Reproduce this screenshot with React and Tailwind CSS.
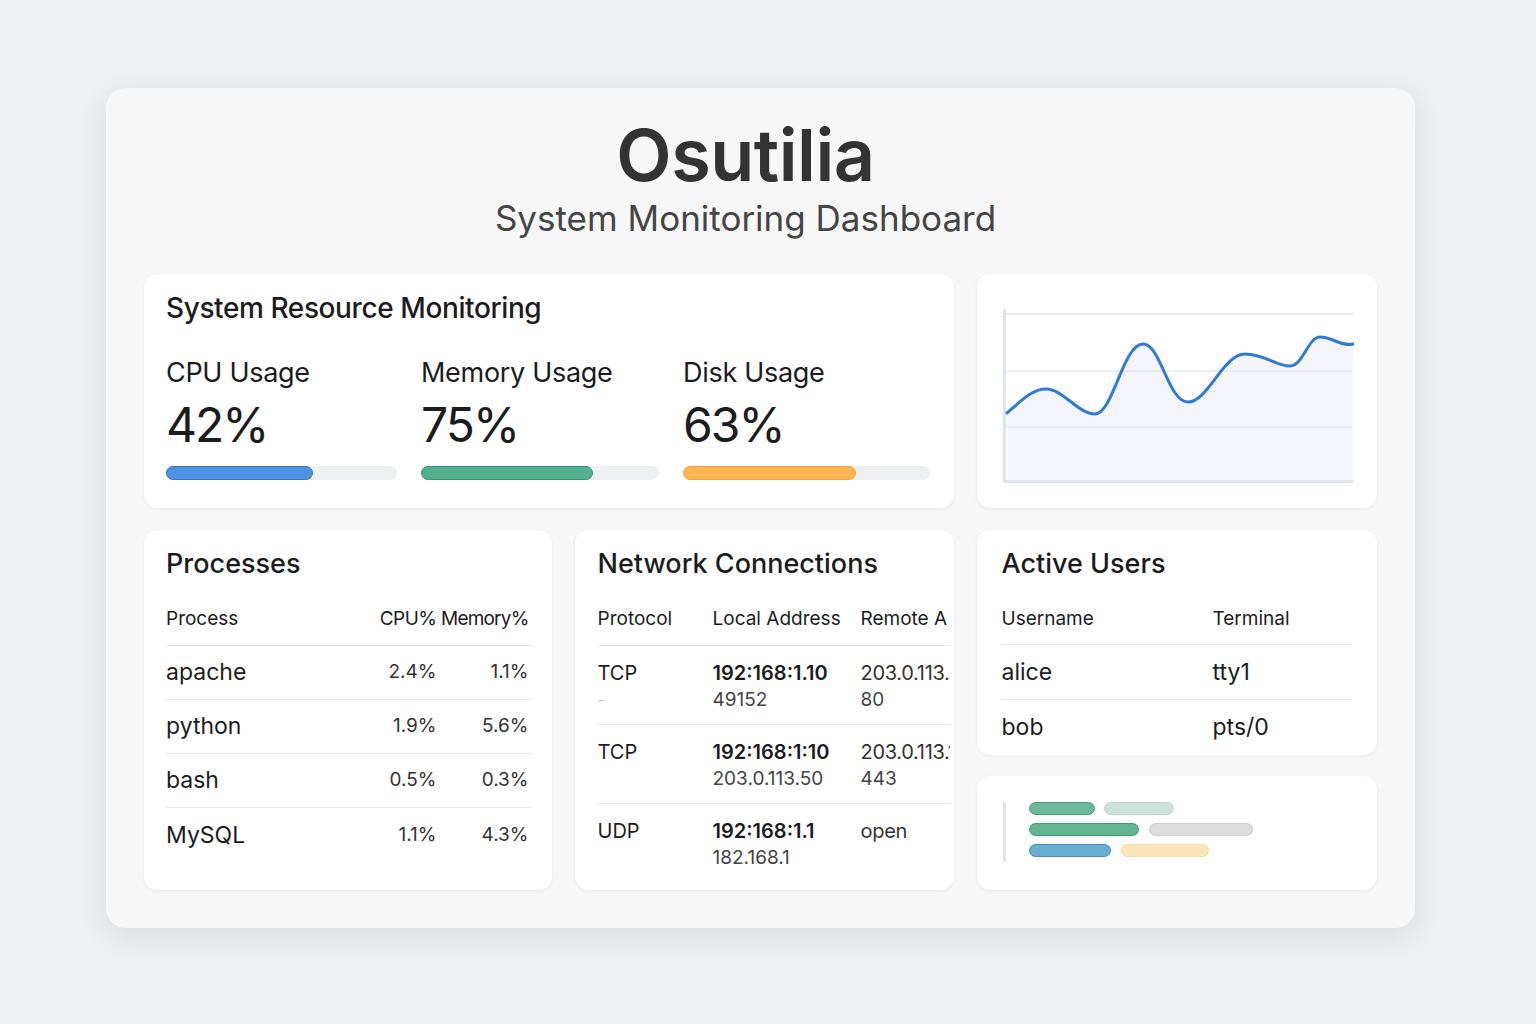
const resources = [
  { label: 'CPU Usage', value: '42%', fill: 147, bar: 'bg-[#4f93e0] border-[#2c78d6]' },
  { label: 'Memory Usage', value: '75%', fill: 172, bar: 'bg-[#52b08e] border-[#2e9670]' },
  { label: 'Disk Usage', value: '63%', fill: 173, bar: 'bg-[#fbb652] border-[#f6a126]' },
]

const processes = [
  ['apache', '2.4%', '1.1%'],
  ['python', '1.9%', '5.6%'],
  ['bash', '0.5%', '0.3%'],
  ['MySQL', '1.1%', '4.3%'],
]

const connections = [
  { proto: 'TCP', dash: true, local: '192:168:1.10', localSub: '49152', remote: '203.0.113.', remoteSub: '80' },
  { proto: 'TCP', local: '192:168:1:10', localSub: '203.0.113.50', remote: '203.0.113.1', remoteSub: '443' },
  { proto: 'UDP', local: '192:168:1.1', localSub: '182.168.1', remote: 'open', remoteSub: '' },
]

const users = [
  ['alice', 'tty1'],
  ['bob', 'pts/0'],
]

const card = 'bg-white rounded-[14px] shadow-[0_1px_4px_rgba(0,0,0,0.06)]'

function LineChart() {
  const line =
    'M4,104 C20,90 30,80 43,80 C60,80 75,105 92,105 C110,105 120,35 140,35 C158,35 165,93 185,93 C205,93 220,45 242,45 C262,45 272,57 287,57 C300,57 305,28 317,28 C330,28 338,38 350,35'
  return (
    <svg width="351" height="176" viewBox="0 0 351 176">
      <path d={line + ' L350,172 L4,172 Z'} fill="#f4f6fb" />
      <line x1="3" y1="5" x2="350" y2="5" stroke="#e7e9f0" strokeWidth="2" />
      <line x1="3" y1="62" x2="350" y2="62" stroke="#e7e9f0" strokeWidth="1.5" />
      <line x1="3" y1="118" x2="350" y2="118" stroke="#e7e9f0" strokeWidth="1.5" />
      <line x1="1.5" y1="0" x2="1.5" y2="174" stroke="#dfe3ec" strokeWidth="3" />
      <line x1="0" y1="172.5" x2="350" y2="172.5" stroke="#dfe3ec" strokeWidth="3" />
      <path d={line} fill="none" stroke="#2f7bd9" strokeWidth="3" strokeLinecap="round" />
    </svg>
  )
}

export default function App() {
  return (
    <div
      className="min-h-screen bg-[#eeeff1] pt-[88px] pb-[96px] pl-[106px] text-[#1c1c1e]"
      style={{ fontFamily: 'Inter, "Noto Sans", sans-serif' }}
    >
      <div className="w-[1309px] bg-[#f7f7f8] rounded-[20px] shadow-[0_8px_30px_rgba(0,0,0,0.08)] px-[38px] pt-[31px] pb-[38px]">
        <div className="pr-[30px]">
          <h1 className="text-center text-[72px] leading-none font-semibold text-[#333] tracking-[-0.5px]">Osutilia</h1>
          <p className="text-center text-[35px] leading-none text-[#454545] mt-[10px] mb-[38px]">System Monitoring Dashboard</p>
        </div>

        <div className="flex gap-[23px]">
          <div className={`${card} w-[810px] h-[234px] px-[22px] pt-[20px]`}>
            <h2 className="text-[28px] leading-[28px] font-medium tracking-[-0.4px]">System Resource Monitoring</h2>
            <div className="grid grid-cols-[231px_238px_247px] gap-x-[24px] mt-[37px]">
              {resources.map((r) => (
                <div key={r.label}>
                  <div className="text-[27px] leading-[28px] tracking-[-0.3px]">{r.label}</div>
                  <div className="text-[48px] leading-[52px] mt-[12px] tracking-[-2px]">{r.value}</div>
                  <div className="h-[14px] rounded-full bg-[#eeeff1] mt-[15px]">
                    <div className={`h-full rounded-full border ${r.bar}`} style={{ width: r.fill }} />
                  </div>
                </div>
              ))}
            </div>
          </div>
          <div className={`${card} flex-1 h-[234px] pl-[26px] pt-[35px]`}>
            <LineChart />
          </div>
        </div>

        <div className="flex gap-[23px] mt-[22px]">
          <div className={`${card} w-[408px] h-[360px] pl-[22px] pr-[20px] pt-[20px]`}>
            <h2 className="text-[27px] leading-[28px] font-medium">Processes</h2>
            <div className="grid grid-cols-[1fr_74px_95px] text-[19px] leading-[26px] mt-[28px] pb-[13px] border-b border-[#e8e8ea]">
              <span>Process</span>
              <span className="text-right tracking-[-0.5px]">CPU%</span>
              <span className="text-right pr-[3px] tracking-[-0.8px]">Memory%</span>
            </div>
            {processes.map(([name, cpu, mem], i) => (
              <div
                key={name}
                className={`grid grid-cols-[1fr_74px_95px] h-[54px] items-center ${i < processes.length - 1 ? 'border-b border-[#e8e8ea]' : ''}`}
              >
                <span className="text-[23px]">{name}</span>
                <span className="text-right text-[19px] text-[#333]">{cpu}</span>
                <span className="text-right text-[19px] text-[#333] pr-[3px]">{mem}</span>
              </div>
            ))}
          </div>

          <div className={`${card} w-[379px] h-[360px] pl-[23px] pr-[4px] pt-[20px]`}>
            <h2 className="text-[27px] leading-[28px] font-medium whitespace-nowrap">Network Connections</h2>
            <div className="overflow-hidden">
              <div className="w-[352px]">
                <div className="grid grid-cols-[115px_148px_1fr] text-[19px] leading-[26px] mt-[28px] pb-[13px] border-b border-[#e8e8ea] whitespace-nowrap">
                  <span>Protocol</span>
                  <span>Local Address</span>
                  <span>Remote A</span>
                </div>
                {connections.map((c, i) => (
                  <div
                    key={i}
                    className={`grid grid-cols-[115px_148px_1fr] pt-[14px] pb-[11px] text-[20px] leading-[26px] whitespace-nowrap ${i < connections.length - 1 ? 'border-b border-[#e8e8ea]' : ''}`}
                  >
                    <div>
                      <div>{c.proto}</div>
                      {c.dash && <div className="text-[#c8c8cc] text-[14px] leading-[27px]">–</div>}
                    </div>
                    <div>
                      <div className="font-semibold">{c.local}</div>
                      <div className="text-[19px] text-[#444] leading-[27px]">{c.localSub}</div>
                    </div>
                    <div>
                      <div className="text-[#333] tracking-[-0.3px]">{c.remote}</div>
                      <div className="text-[19px] text-[#444] leading-[27px]">{c.remoteSub}</div>
                    </div>
                  </div>
                ))}
              </div>
            </div>
          </div>

          <div className="w-[401px] flex flex-col gap-[21px]">
            <div className={`${card} h-[225px] pl-[25px] pr-[25px] pt-[20px]`}>
              <h2 className="text-[27px] leading-[28px] font-medium">Active Users</h2>
              <div className="grid grid-cols-[211px_1fr] text-[19px] leading-[26px] mt-[28px] pb-[12px] border-b border-[#e8e8ea]">
                <span>Username</span>
                <span>Terminal</span>
              </div>
              {users.map(([u, t], i) => (
                <div
                  key={u}
                  className={`grid grid-cols-[211px_1fr] h-[55px] items-center text-[23px] ${i < users.length - 1 ? 'border-b border-[#e8e8ea]' : ''}`}
                >
                  <span>{u}</span>
                  <span>{t}</span>
                </div>
              ))}
            </div>

            <div className={`${card} flex-1 pl-[26px] pt-[26px] flex`}>
              <div className="w-[3px] h-[60px] bg-[#e3e4e8] rounded-full" />
              <div className="ml-[23px] flex flex-col gap-[8px]">
                <div className="flex gap-[9px]">
                  <div className="h-[13px] w-[66px] rounded-full bg-[#6db89a] border border-[#4a9f7c]" />
                  <div className="h-[13px] w-[70px] rounded-full bg-[#cae4d9] border border-[#b9d8cb]" />
                </div>
                <div className="flex gap-[10px]">
                  <div className="h-[13px] w-[110px] rounded-full bg-[#63b490] border border-[#3f9b74]" />
                  <div className="h-[13px] w-[104px] rounded-full bg-[#dcdcdc] border border-[#cfcfcf]" />
                </div>
                <div className="flex gap-[10px]">
                  <div className="h-[13px] w-[82px] rounded-full bg-[#68aed0] border border-[#3d8fc0]" />
                  <div className="h-[13px] w-[88px] rounded-full bg-[#fde6b8] border border-[#f8dba6]" />
                </div>
              </div>
            </div>
          </div>
        </div>
      </div>
    </div>
  )
}
